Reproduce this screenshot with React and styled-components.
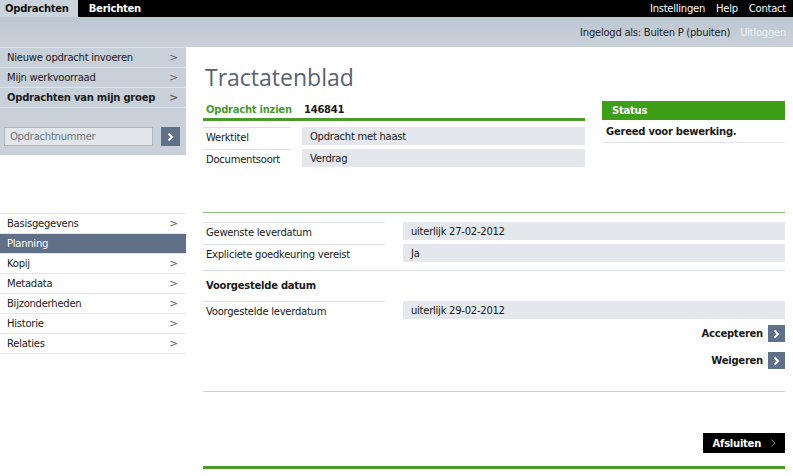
import styled, { createGlobalStyle } from 'styled-components'

const GlobalStyle = createGlobalStyle`
  body {
    margin: 0;
    background: #fff;
    font-family: 'DejaVu Sans', Verdana, sans-serif;
    font-size: 10px;
    letter-spacing: -0.25px;
    color: #1a1a1a;
  }
`

const Page = styled.div`
  width: 793px;
  height: 476px;
  overflow: hidden;
`

const TopBar = styled.div`
  display: flex;
  justify-content: space-between;
  align-items: stretch;
  height: 17px;
  background: #000;
`

const Tabs = styled.div`
  display: flex;
`

const Tab = styled.div`
  display: flex;
  align-items: center;
  padding: 0 ${(p) => (p.$active ? '9px' : '11px')} 0 ${(p) => (p.$active ? '5px' : '11px')};
  font-weight: bold;
  background: ${(p) => (p.$active ? '#cbd3dc' : 'transparent')};
  color: ${(p) => (p.$active ? '#111' : '#fff')};
`

const TopLinks = styled.div`
  display: flex;
  align-items: center;
  gap: 11px;
  padding-right: 7px;
  color: #fff;
`

const SubBar = styled.div`
  display: flex;
  justify-content: flex-end;
  align-items: center;
  gap: 10px;
  height: 30px;
  padding-right: 7px;
  background: linear-gradient(to bottom, #bcc6d1, #cbd2db);
  color: #222;
`

const Logout = styled.span`
  color: #eef1f5;
`

const Body = styled.div`
  display: flex;
`

const Sidebar = styled.div`
  width: 186px;
  flex-shrink: 0;
`

const SideTop = styled.div`
  background: #c8d0da;
  height: 108px;
`

const SideItem = styled.div`
  display: flex;
  justify-content: space-between;
  align-items: center;
  height: 19px;
  padding: 0 8px 0 7px;
  border-bottom: 1px solid ${(p) => (p.$light ? '#dfe4ea' : '#e4e6e9')};
  font-weight: ${(p) => (p.$bold ? 'bold' : 'normal')};
  background: ${(p) => (p.$active ? '#5f7088' : 'transparent')};
  color: ${(p) => (p.$active ? '#fff' : '#1a1a1a')};
`

const SideMenu = styled.div`
  border-top: 1px solid #dfe4ea;
`

const Chevron = styled.span`
  color: #666;
  font-size: 11px;
`

const SearchRow = styled.div`
  display: flex;
  align-items: center;
  gap: 8px;
  padding: 19px 6px 0 4px;
`

const SearchInput = styled.div`
  width: 143px;
  height: 17px;
  padding-left: 5px;
  display: flex;
  align-items: center;
  background: #e2e5e9;
  border: 1px solid #aeb6c0;
  color: #6a7787;
`

const ArrowButton = styled.div`
  width: ${(p) => p.$size || 18}px;
  height: ${(p) => p.$size || 18}px;
  display: flex;
  align-items: center;
  justify-content: center;
  background: #5f7189;
`

const LowerMenu = styled.div`
  margin-top: 58px;
  border-top: 1px solid #e4e6e9;
`

const Main = styled.div`
  flex: 1;
  padding: 0 8px 0 17px;
`

const Title = styled.h1`
  margin: 15px 0 0 2px;
  font-family: 'Open Sans', 'DejaVu Sans', sans-serif;
  font-weight: normal;
  font-size: 23px;
  letter-spacing: 0;
  line-height: 30px;
  color: #5a6272;
`

const TopSection = styled.div`
  display: flex;
  gap: 17px;
  margin-top: 8px;
`

const Overview = styled.div`
  width: 382px;
`

const OverviewHead = styled.div`
  display: flex;
  align-items: center;
  height: 18px;
  padding-left: 3px;
  border-bottom: 3px solid #4b9a2c;
  font-weight: bold;
`

const GreenLabel = styled.span`
  color: #4b9a2c;
  width: 98px;
`

const Row = styled.div`
  display: flex;
  margin-top: ${(p) => p.$top ?? 2}px;
`

const Label = styled.div`
  width: ${(p) => p.$w}px;
  flex-shrink: 0;
  height: 20px;
  display: flex;
  align-items: center;
  padding-left: 3px;
  box-sizing: border-box;
  border-top: 1px solid #dcdfe3;
`

const Value = styled.div`
  flex: 1;
  margin-left: ${(p) => p.$gap}px;
  height: 18px;
  display: flex;
  align-items: center;
  padding-left: 8px;
  background: #e4e7eb;
`

const Status = styled.div`
  width: 183px;
  margin-top: 1px;
`

const StatusHead = styled.div`
  height: 19px;
  display: flex;
  align-items: center;
  padding-left: 10px;
  background: #3f9e18;
  color: #fff;
  font-weight: bold;
`

const StatusText = styled.div`
  height: 22px;
  display: flex;
  align-items: center;
  padding-left: 4px;
  font-weight: bold;
  border-bottom: 1px solid #e2e4e7;
`

const Section = styled.div`
  margin-top: 43px;
  border-top: 1px solid #8cbd78;
  padding-top: 7px;
`

const Divider = styled.div`
  margin-top: ${(p) => p.$top}px;
  border-top: 1px solid ${(p) => p.$color || '#d6d9de'};
`

const SubTitle = styled.div`
  font-weight: bold;
  padding: 9px 0 0 3px;
  height: 14px;
`

const Actions = styled.div`
  display: flex;
  flex-direction: column;
  align-items: flex-end;
  gap: 10px;
  margin-top: 4px;
`

const Action = styled.div`
  display: flex;
  align-items: center;
  gap: 5px;
  font-weight: bold;
`

const Footer = styled.div`
  display: flex;
  justify-content: flex-end;
  margin-top: 41px;
`

const CloseButton = styled.div`
  display: flex;
  align-items: center;
  gap: 9px;
  height: 20px;
  padding: 0 8px 0 10px;
  background: #000;
  color: #fff;
  font-weight: bold;
`

const BottomLine = styled.div`
  margin-top: 13px;
  border-top: 3px solid #4b9a2c;
`

const Arrow = ({ color = '#fff', weight = 2 }) => (
  <svg width="7" height="10" viewBox="0 0 7 10">
    <path d="M1.5 1.5 L5 5 L1.5 8.5" fill="none" stroke={color} strokeWidth={weight} />
  </svg>
)

const topMenu = [
  { label: 'Nieuwe opdracht invoeren' },
  { label: 'Mijn werkvoorraad' },
  { label: 'Opdrachten van mijn groep', bold: true },
]

const lowerMenu = ['Basisgegevens', 'Planning', 'Kopij', 'Metadata', 'Bijzonderheden', 'Historie', 'Relaties']

export default function App() {
  return (
    <Page>
      <GlobalStyle />
      <TopBar>
        <Tabs>
          <Tab $active>Opdrachten</Tab>
          <Tab>Berichten</Tab>
        </Tabs>
        <TopLinks>
          <span>Instellingen</span>
          <span>Help</span>
          <span>Contact</span>
        </TopLinks>
      </TopBar>
      <SubBar>
        <span>Ingelogd als: Buiten P (pbuiten)</span>
        <Logout>Uitloggen</Logout>
      </SubBar>
      <Body>
        <Sidebar>
          <SideTop>
            <SideMenu>
              {topMenu.map((m) => (
                <SideItem key={m.label} $bold={m.bold} $light>
                  <span>{m.label}</span>
                  <Chevron>&gt;</Chevron>
                </SideItem>
              ))}
            </SideMenu>
            <SearchRow>
              <SearchInput>Opdrachtnummer</SearchInput>
              <ArrowButton $size={19}>
                <Arrow />
              </ArrowButton>
            </SearchRow>
          </SideTop>
          <LowerMenu>
            {lowerMenu.map((m) => (
              <SideItem key={m} $active={m === 'Planning'}>
                <span>{m}</span>
                {m !== 'Planning' && <Chevron>&gt;</Chevron>}
              </SideItem>
            ))}
          </LowerMenu>
        </Sidebar>
        <Main>
          <Title>Tractatenblad</Title>
          <TopSection>
            <Overview>
              <OverviewHead>
                <GreenLabel>Opdracht inzien</GreenLabel>
                <span>146841</span>
              </OverviewHead>
              <Row $top={6}>
                <Label $w={88}>Werktitel</Label>
                <Value $gap={11}>Opdracht met haast</Value>
              </Row>
              <Row>
                <Label $w={88}>Documentsoort</Label>
                <Value $gap={11}>Verdrag</Value>
              </Row>
            </Overview>
            <Status>
              <StatusHead>Status</StatusHead>
              <StatusText>Gereed voor bewerking.</StatusText>
            </Status>
          </TopSection>
          <Section>
            <Row>
              <Label $w={182}>Gewenste leverdatum</Label>
              <Value $gap={18}>uiterlijk 27-02-2012</Value>
            </Row>
            <Row>
              <Label $w={182}>Expliciete goedkeuring vereist</Label>
              <Value $gap={18}>Ja</Value>
            </Row>
            <Divider $top={6} />
            <SubTitle>Voorgestelde datum</SubTitle>
            <Row $top={7}>
              <Label $w={182}>Voorgestelde leverdatum</Label>
              <Value $gap={18}>uiterlijk 29-02-2012</Value>
            </Row>
            <Actions>
              <Action>
                Accepteren
                <ArrowButton $size={17}>
                  <Arrow />
                </ArrowButton>
              </Action>
              <Action>
                Weigeren
                <ArrowButton $size={17}>
                  <Arrow />
                </ArrowButton>
              </Action>
            </Actions>
            <Divider $top={22} $color="#c9ccd6" />
            <Footer>
              <CloseButton>
                Afsluiten <Arrow color="#888" weight={1} />
              </CloseButton>
            </Footer>
            <BottomLine />
          </Section>
        </Main>
      </Body>
    </Page>
  )
}
